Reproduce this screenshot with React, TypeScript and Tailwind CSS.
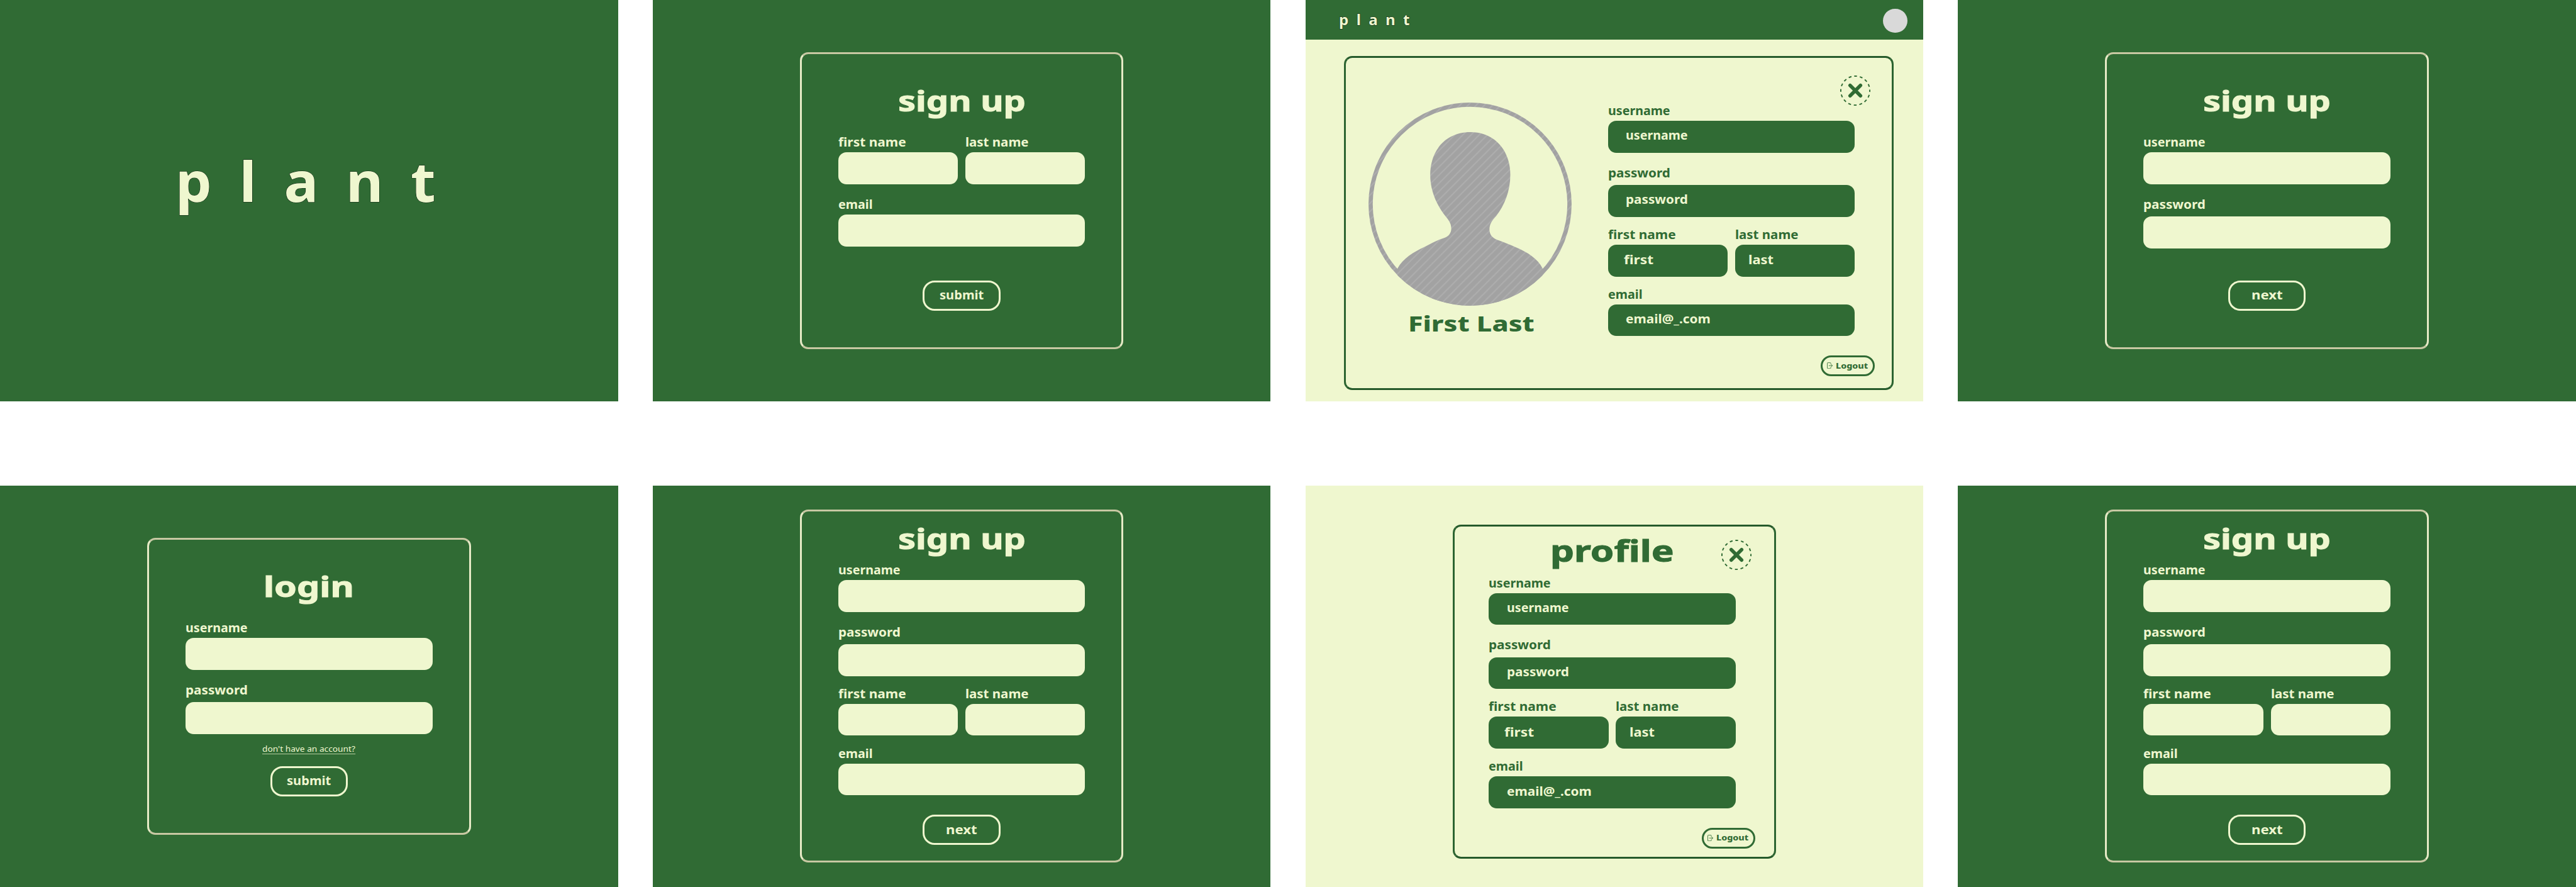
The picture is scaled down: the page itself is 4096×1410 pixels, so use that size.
import { useLayoutEffect, useRef, useState, type ReactNode } from "react";

/* Lengths on the spacing scale are board units: one unit is 0.64985px. */
const unit = 0.64985;

type FitProps = { w: number; className?: string; children: ReactNode };

/* A single line of text stretched horizontally to a set width in board units. */
function Fit({ w, className = "", children }: FitProps) {
  const ref = useRef<HTMLSpanElement>(null);
  const [scale, setScale] = useState(1);
  useLayoutEffect(() => {
    if (ref.current) setScale((w * unit) / ref.current.offsetWidth);
  }, [w]);
  return (
    <span className="block overflow-visible text-left whitespace-nowrap" style={{ width: w * unit }}>
      <span
        ref={ref}
        className={`inline-block origin-left align-top leading-none ${className}`}
        style={{ transform: `scaleX(${scale})` }}
      >
        {children}
      </span>
    </span>
  );
}

function Screen({ light = false, children }: { light?: boolean; children?: ReactNode }) {
  return (
    <section
      className={`flex h-982 w-1512 flex-col items-center overflow-hidden ${
        light ? "bg-[#eff7cf] text-[#306b34]" : "bg-[#306b34] text-[#eff7cf]"
      }`}
    >
      {children}
    </section>
  );
}

const darkFrame =
  "rounded-[13px] border-[3.25px] border-x-[#e6eac6] border-y-[#c8c8a3]";
const lightFrame =
  "rounded-[13px] border-[3.25px] border-x-[#2c6431] border-y-[#255a2b]";

type FieldProps = {
  label: string;
  labelW: number;
  value?: string;
  valueW?: number;
  inset?: string;
  light?: boolean;
  half?: boolean;
  low?: boolean;
};

function Field({ label, labelW, value, valueW = 0, inset = "pl-44", light, half, low }: FieldProps) {
  return (
    <label className={`flex flex-col ${half ? "w-293" : "w-604"} ${low ? "gap-16" : "gap-11"}`}>
      <span className="block h-30 pt-1">
        <Fit w={labelW} className="text-[19.5px]">{label}</Fit>
      </span>
      <span
        className={`block h-78 rounded-[13px] ${
          light ? "bg-[#306b34] text-[#eff7cf]" : "bg-[#eff7cf]"
        } ${half ? "pt-22" : "pt-20.5"} ${inset}`}
      >
        {value && <Fit w={valueW} className="text-[19.5px]">{value}</Fit>}
      </span>
    </label>
  );
}

function NameFields({ light = false }: { light?: boolean }) {
  return (
    <div className="flex w-604 justify-between">
      <Field label="first name" labelW={165} half light={light} value={light ? "first" : undefined} valueW={72} inset="pl-38" />
      <Field label="last name" labelW={155} half light={light} value={light ? "last" : undefined} valueW={62} inset="pl-33" />
    </div>
  );
}

function AccountFields({ light = false }: { light?: boolean }) {
  return (
    <div className="flex flex-col">
      <Field label="username" labelW={152} light={light} value={light ? "username" : undefined} valueW={152} />
      <div className="mt-33">
        <Field label="password" labelW={152} low light={light} value={light ? "password" : undefined} valueW={152} />
      </div>
    </div>
  );
}

function AllFields({ light = false }: { light?: boolean }) {
  return (
    <div className="flex w-604 flex-col gap-27">
      <AccountFields light={light} />
      <NameFields light={light} />
      <Field label="email" labelW={84} light={light} value={light ? "email@_.com" : undefined} valueW={207} />
    </div>
  );
}

function PillButton({ children, w }: { children: string; w: number }) {
  return (
    <button className="flex h-74 w-190 justify-center rounded-[19px] border-[3px] border-[#eff7cf] pt-16">
      <Fit w={w} className="text-[19.5px]">{children}</Fit>
    </button>
  );
}

function Heading({ children, w }: { children: string; w: number }) {
  return (
    <h1 className="h-69">
      <Fit w={w} className="text-[45px] [-webkit-text-stroke:1px_currentColor]">{children}</Fit>
    </h1>
  );
}

function LogoutButton() {
  return (
    <button className="flex h-51 w-132 items-start self-end rounded-full border-[3px] border-[#306b34] pl-9.5 pt-12.5">
      <svg className="h-16 w-14 shrink-0" viewBox="0 0 14 16" fill="none" stroke="#306b34" strokeWidth="1.3" strokeLinecap="round">
        <path d="M9.4 3.6V2a1 1 0 0 0-1-1H1.8a1 1 0 0 0-1 1v12a1 1 0 0 0 1 1h6.6a1 1 0 0 0 1-1v-1.6" />
        <path d="M5 8h8M10 4.8 13.2 8 10 11.2" />
      </svg>
      <span className="ml-8 -mt-0.5">
        <Fit w={78} className="text-[11.6px] font-extrabold">Logout</Fit>
      </span>
    </button>
  );
}

function CloseButton({ className }: { className: string }) {
  return (
    <button className={`absolute h-74 w-74 ${className}`} aria-label="close">
      <svg className="size-full" viewBox="-37 -37 74 74" fill="none" stroke="#306b34">
        <circle r="35.5" strokeWidth="3" pathLength="160" strokeDasharray="5 5" strokeDashoffset="2.5" />
        <path d="M-12.7-12.7 12.7 12.7M12.7-12.7-12.7 12.7" strokeWidth="8.6" strokeLinecap="round" />
      </svg>
    </button>
  );
}

function Avatar() {
  return (
    <svg className="h-497 w-497" viewBox="0 0 497 497">
      <defs>
        <pattern id="hatch" width="20" height="20" patternUnits="userSpaceOnUse">
          <rect width="20" height="20" fill="#a2a2a2" />
          <path d="M-10 20 20-10M0 30 30 0" stroke="#adadad" strokeWidth="3.4" />
        </pattern>
        <clipPath id="disc">
          <circle cx="248.5" cy="248.5" r="248.5" />
        </clipPath>
      </defs>
      <circle cx="248.5" cy="248.5" r="243.3" fill="none" stroke="url(#hatch)" strokeWidth="10.4" />
      <path
        clipPath="url(#disc)"
        fill="url(#hatch)"
        d="M249 72.5C190 72.5 151 116 151 177C151 216 167 252 190 280C199 291 202.500 298 202.500 309C202.500 320 195 329 183 332C166 337 153 345 137 353C111 365 84 381 71 406V497H426V406C414 381 388 366 363 355C346 348 333 342 315 336C303 331 296 323 296 310C296 298 302 288 312 278C333 252 347 216 347 177C347 116 308 72.500 249 72.500Z"
      />
    </svg>
  );
}

function SplashScreen() {
  return (
    <Screen>
      <div className="w-full pt-374 pl-430">
        <Fit
          w={704}
          className="text-[88px] tracking-[42px] [-webkit-text-stroke:1px_#0b1c0d] [paint-order:stroke]"
        >
          plant
        </Fit>
      </div>
    </Screen>
  );
}

function SignUpContactScreen() {
  return (
    <Screen>
      <div className={`mt-128 flex h-726 w-792 flex-col items-center pt-78.5 ${darkFrame}`}>
        <Heading w={312}>sign up</Heading>
        <div className="mt-51.5 flex flex-col gap-33">
          <NameFields />
          <Field label="email" labelW={84} />
        </div>
        <div className="mt-84">
          <PillButton w={108}>submit</PillButton>
        </div>
      </div>
    </Screen>
  );
}

function SignUpAccountScreen() {
  return (
    <Screen>
      <div className={`mt-128 flex h-726 w-792 flex-col items-center pt-78.5 ${darkFrame}`}>
        <Heading w={312}>sign up</Heading>
        <div className="mt-51.5">
          <AccountFields />
        </div>
        <div className="mt-79">
          <PillButton w={77}>next</PillButton>
        </div>
      </div>
    </Screen>
  );
}

function LoginScreen() {
  return (
    <Screen>
      <div className={`mt-128 flex h-726 w-792 flex-col items-center pt-78.5 ${darkFrame}`}>
        <Heading w={222}>login</Heading>
        <div className="mt-51.5">
          <AccountFields />
        </div>
        <a className="mt-28 block h-20">
          <Fit w={228} className="border-b border-[#eff7cf]/70 text-[12.6px] font-normal leading-[12.4px]">
            don't have an account?
          </Fit>
        </a>
        <div className="mt-31">
          <PillButton w={108}>submit</PillButton>
        </div>
      </div>
    </Screen>
  );
}

function SignUpFullScreen() {
  return (
    <Screen>
      <div className={`mt-59 flex h-863 w-792 flex-col items-center pt-30.5 ${darkFrame}`}>
        <Heading w={312}>sign up</Heading>
        <div className="mt-26.5">
          <AllFields />
        </div>
        <div className="mt-48">
          <PillButton w={77}>next</PillButton>
        </div>
      </div>
    </Screen>
  );
}

function ProfileScreen() {
  return (
    <Screen light>
      <div className="flex h-97 w-full shrink-0 items-start justify-between bg-[#306b34] pl-82 pr-39 text-[#eff7cf]">
        <div className="pt-30.5">
          <Fit
            w={192}
            className="text-[23.8px] tracking-[12.2px] [-webkit-text-stroke:1px_#0b1c0d] [paint-order:stroke]"
          >
            plant
          </Fit>
        </div>
        <div className="mt-21 size-59 rounded-full bg-[#d9d9d9]" />
      </div>
      <div className={`relative mt-40 ml-22 flex h-817 w-1344 shrink-0 pl-55 ${lightFrame}`}>
        <div className="flex w-497 flex-col pt-109">
          <Avatar />
          <div className="mt-17 flex justify-center pl-7">
            <Fit w={310} className="text-[34px] font-extrabold">First Last</Fit>
          </div>
        </div>
        <div className="ml-89 flex w-653 flex-col gap-47 pt-113">
          <AllFields light />
          <LogoutButton />
        </div>
        <CloseButton className="top-43 right-52" />
      </div>
    </Screen>
  );
}

function ProfileCardScreen() {
  return (
    <Screen light>
      <div className={`relative mt-96 flex h-817 w-792 flex-col pt-23 pl-84 ${lightFrame}`}>
        <h1 className="flex h-72 w-604 justify-center">
          <Fit w={302} className="text-[47px] [-webkit-text-stroke:1px_currentColor]">profile</Fit>
        </h1>
        <div className="mt-26 flex w-653 flex-col gap-47">
          <AllFields light />
          <LogoutButton />
        </div>
        <CloseButton className="top-31 right-56" />
      </div>
    </Screen>
  );
}

export default function App() {
  return (
    <main className="grid h-[1410px] w-[4096px] grid-cols-[repeat(4,max-content)] content-start gap-x-85 gap-y-206 overflow-hidden bg-white font-['Noto_Sans','Open_Sans',sans-serif] font-bold [--spacing:0.64985px]">
      <SplashScreen />
      <SignUpContactScreen />
      <ProfileScreen />
      <SignUpAccountScreen />
      <LoginScreen />
      <SignUpFullScreen />
      <ProfileCardScreen />
      <SignUpFullScreen />
    </main>
  );
}
